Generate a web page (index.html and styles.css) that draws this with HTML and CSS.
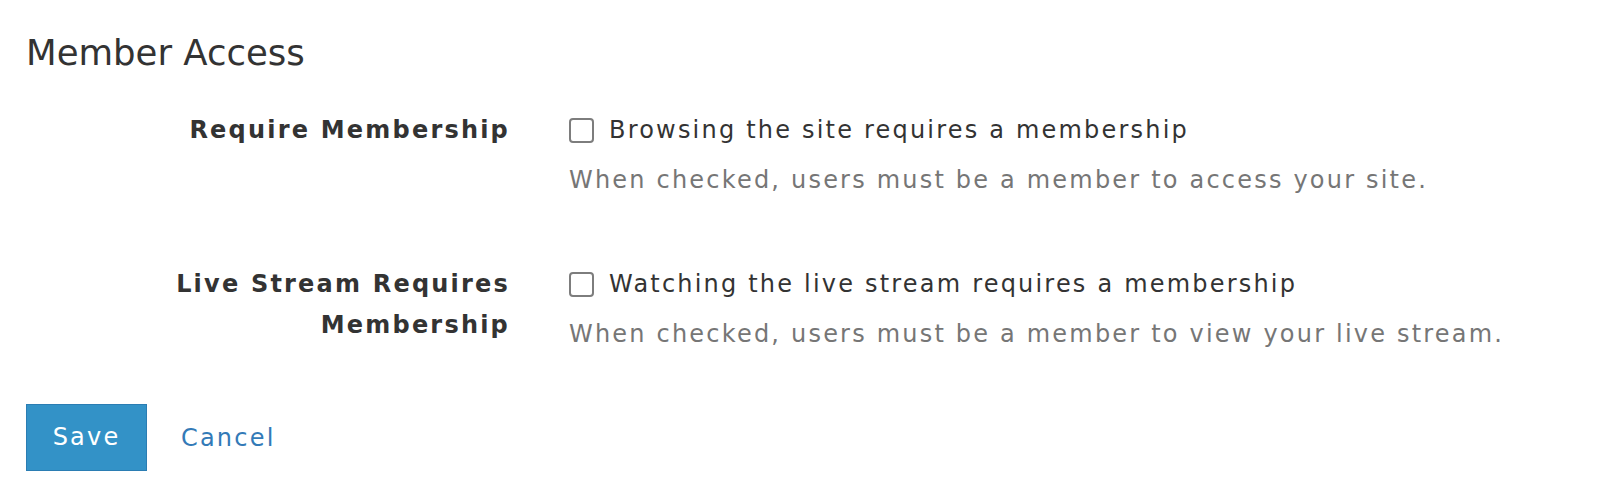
FILE: index.html
```html
<!DOCTYPE html>
<html lang="en">
<head>
<meta charset="utf-8">
<title>Member Access</title>
<link rel="stylesheet" href="styles.css">
</head>
<body>
<div class="page">
  <h2 class="title">Member Access</h2>
  <form class="form">
    <div class="row">
      <label class="label" for="req">Require Membership</label>
      <div class="control">
        <label class="check">
          <input type="checkbox" id="req" class="box">
          <span>Browsing the site requires a membership</span>
        </label>
        <p class="help">When checked, users must be a member to access your site.</p>
      </div>
    </div>
    <div class="row">
      <label class="label" for="live">Live Stream Requires Membership</label>
      <div class="control">
        <label class="check">
          <input type="checkbox" id="live" class="box">
          <span>Watching the live stream requires a membership</span>
        </label>
        <p class="help">When checked, users must be a member to view your live stream.</p>
      </div>
    </div>
    <div class="actions">
      <button type="button" class="btn">Save</button>
      <a href="#" class="cancel">Cancel</a>
    </div>
  </form>
</div>
</body>
</html>
```

FILE: styles.css
```css
* { box-sizing: border-box; }
html, body {
  margin: 0;
  padding: 0;
  background: #ffffff;
}
body {
  font-family: "DejaVu Sans", Verdana, sans-serif;
  font-size: 24px;
  letter-spacing: 2.2px;
  color: #333333;
}
.page {
  padding: 33px 26px 0 26px;
}
.title {
  margin: 0;
  font-size: 35.5px;
  font-weight: normal;
  letter-spacing: 0;
  line-height: 40px;
  color: #333333;
}
.form {
  margin-top: 37px;
}
.row {
  display: grid;
  grid-template-columns: 484px 1fr;
  column-gap: 59px;
  margin-bottom: 64px;
}
.row + .row {
  margin-bottom: 50px;
}
.label {
  text-align: right;
  font-weight: bold;
  line-height: 41px;
}
.control {
  display: flex;
  flex-direction: column;
}
.check {
  display: flex;
  align-items: center;
  gap: 15px;
  line-height: 40px;
}
.box {
  appearance: none;
  -webkit-appearance: none;
  margin: 0;
  width: 25px;
  height: 25px;
  border: 2px solid #7d7d7d;
  border-radius: 4px;
  background: #ffffff;
  flex: none;
}
.help {
  margin: 10px 0 0 0;
  line-height: 40px;
  color: #767676;
}
.actions {
  display: flex;
  align-items: center;
}
.btn {
  height: 67px;
  width: 121px;
  padding: 0;
  border: 1px solid #2b7db3;
  background: #3392c7;
  color: #ffffff;
  font-family: inherit;
  font-size: 24px;
  letter-spacing: 2.2px;
  line-height: 65px;
  border-radius: 0;
}
.cancel {
  margin-left: 34px;
  color: #337ab7;
  text-decoration: none;
  line-height: 40px;
}
```
